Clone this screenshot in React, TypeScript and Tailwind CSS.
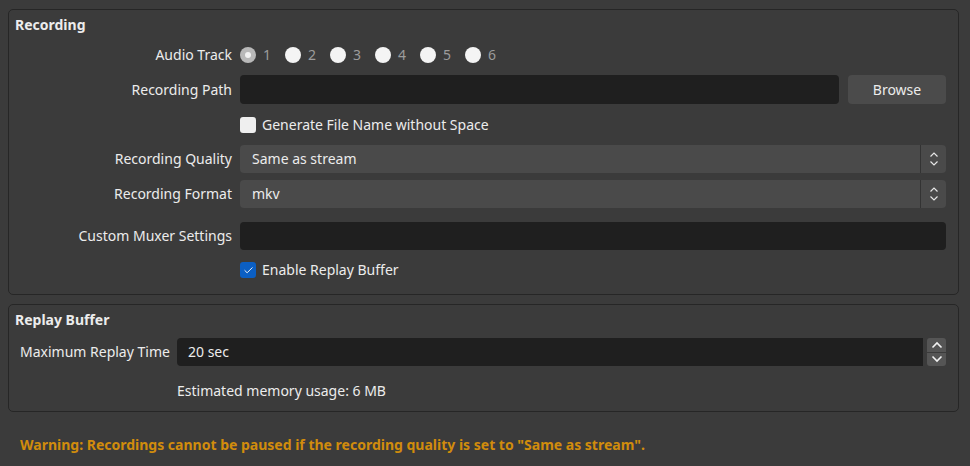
import { Check } from "lucide-react";

const font = { fontFamily: '"Noto Sans", "Open Sans", sans-serif' };

function Radio({ n, checked }: { n: number; checked?: boolean }) {
  return (
    <div className="flex items-center gap-[7px] w-[45px]">
      {checked ? (
        <span className="w-[16px] h-[16px] rounded-full bg-[#b9b9b9] flex items-center justify-center">
          <span className="w-[6px] h-[6px] rounded-full bg-[#f2f2f2]" />
        </span>
      ) : (
        <span className="w-[16px] h-[16px] rounded-full bg-[#f4f4f4]" />
      )}
      <span className="text-[#9c9c9c]">{n}</span>
    </div>
  );
}

function Checkbox({ label, checked }: { label: string; checked?: boolean }) {
  return (
    <div className="flex items-center gap-[6px] h-[20px]">
      {checked ? (
        <span className="w-[16px] h-[16px] rounded-[3px] bg-[#0b5fc4] flex items-center justify-center">
          <Check size={11} strokeWidth={2} className="text-white" />
        </span>
      ) : (
        <span className="w-[16px] h-[16px] rounded-[3px] bg-[#efefef]" />
      )}
      <span>{label}</span>
    </div>
  );
}

function Chevrons() {
  return (
    <svg width="10" height="16" viewBox="0 0 10 16" fill="none" stroke="#e6e6e6" strokeWidth="1.2">
      <path d="M1.5 5.5 L5 2 L8.5 5.5" />
      <path d="M1.5 10.5 L5 14 L8.5 10.5" />
    </svg>
  );
}

function Select({ value }: { value: string }) {
  return (
    <div className="flex-1 h-[28px] rounded-[4px] bg-[#4a4a4a] flex">
      <div className="flex-1 flex items-center pl-[12px]">{value}</div>
      <div className="w-[1px] bg-[#333]" />
      <div className="w-[25px] flex items-center justify-center">
        <Chevrons />
      </div>
    </div>
  );
}

function Row({ label, children, className = "" }: { label: string; children?: React.ReactNode; className?: string }) {
  return (
    <div className={`flex items-center gap-[8px] ${className}`}>
      <div className="w-[223px] text-right shrink-0">{label}</div>
      <div className="flex-1 flex items-center">{children}</div>
    </div>
  );
}

export default function App() {
  return (
    <div
      style={font}
      className="w-[970px] h-[466px] bg-[#3b3b3b] text-[#ececec] text-[14px] leading-[20px] pt-[9px] px-[8px] overflow-hidden"
    >
      <div className="w-[951px] border border-[#262626] rounded-[5px] pr-[12px] pb-[14px]">
        <div className="pl-[6px] pt-[5px] font-bold">Recording</div>

        <Row label="Audio Track" className="mt-[10px] h-[20px]">
          {[1, 2, 3, 4, 5, 6].map((n) => (
            <Radio key={n} n={n} checked={n === 1} />
          ))}
        </Row>

        <Row label="Recording Path" className="mt-[10px]">
          <div className="flex-1 h-[29px] rounded-[4px] bg-[#1f1f1f]" />
          <button className="ml-[9px] w-[98px] h-[29px] rounded-[4px] bg-[#4b4b4b]">Browse</button>
        </Row>

        <Row label="" className="mt-[11px]">
          <Checkbox label="Generate File Name without Space" />
        </Row>

        <Row label="Recording Quality" className="mt-[10px]">
          <Select value="Same as stream" />
        </Row>

        <Row label="Recording Format" className="mt-[7px]">
          <Select value="mkv" />
        </Row>

        <Row label="Custom Muxer Settings" className="mt-[14px]">
          <div className="flex-1 h-[28px] rounded-[4px] bg-[#1f1f1f]" />
        </Row>

        <Row label="" className="mt-[10px]">
          <Checkbox label="Enable Replay Buffer" checked />
        </Row>
      </div>

      <div className="mt-[9px] w-[951px] border border-[#262626] rounded-[5px] pr-[12px] pb-[10px]">
        <div className="pl-[6px] pt-[5px] font-bold">Replay Buffer</div>

        <div className="mt-[8px] flex items-center">
          <div className="pl-[11px] w-[168px]">Maximum Replay Time</div>
          <div className="flex-1 h-[28px] rounded-l-[4px] bg-[#1f1f1f] flex items-center pl-[11px]">20 sec</div>
          <div className="ml-[4px] w-[19px] h-[28px] flex flex-col gap-[1px]">
            <div className="flex-1 rounded-t-[3px] bg-[#555] flex items-center justify-center">
              <svg width="12" height="8" viewBox="0 0 12 8" fill="none" stroke="#f2f2f2" strokeWidth="1.6">
                <path d="M1.5 6.5 L6 2 L10.5 6.5" />
              </svg>
            </div>
            <div className="flex-1 rounded-b-[3px] bg-[#555] flex items-center justify-center">
              <svg width="12" height="8" viewBox="0 0 12 8" fill="none" stroke="#f2f2f2" strokeWidth="1.6">
                <path d="M1.5 1.5 L6 6 L10.5 1.5" />
              </svg>
            </div>
          </div>
        </div>

        <div className="mt-[15px] pl-[168px]">Estimated memory usage: 6 MB</div>
      </div>

      <div className="mt-[23px] pl-[12px] font-bold text-[#d18c0c]">
        Warning: Recordings cannot be paused if the recording quality is set to "Same as stream".
      </div>
    </div>
  );
}
